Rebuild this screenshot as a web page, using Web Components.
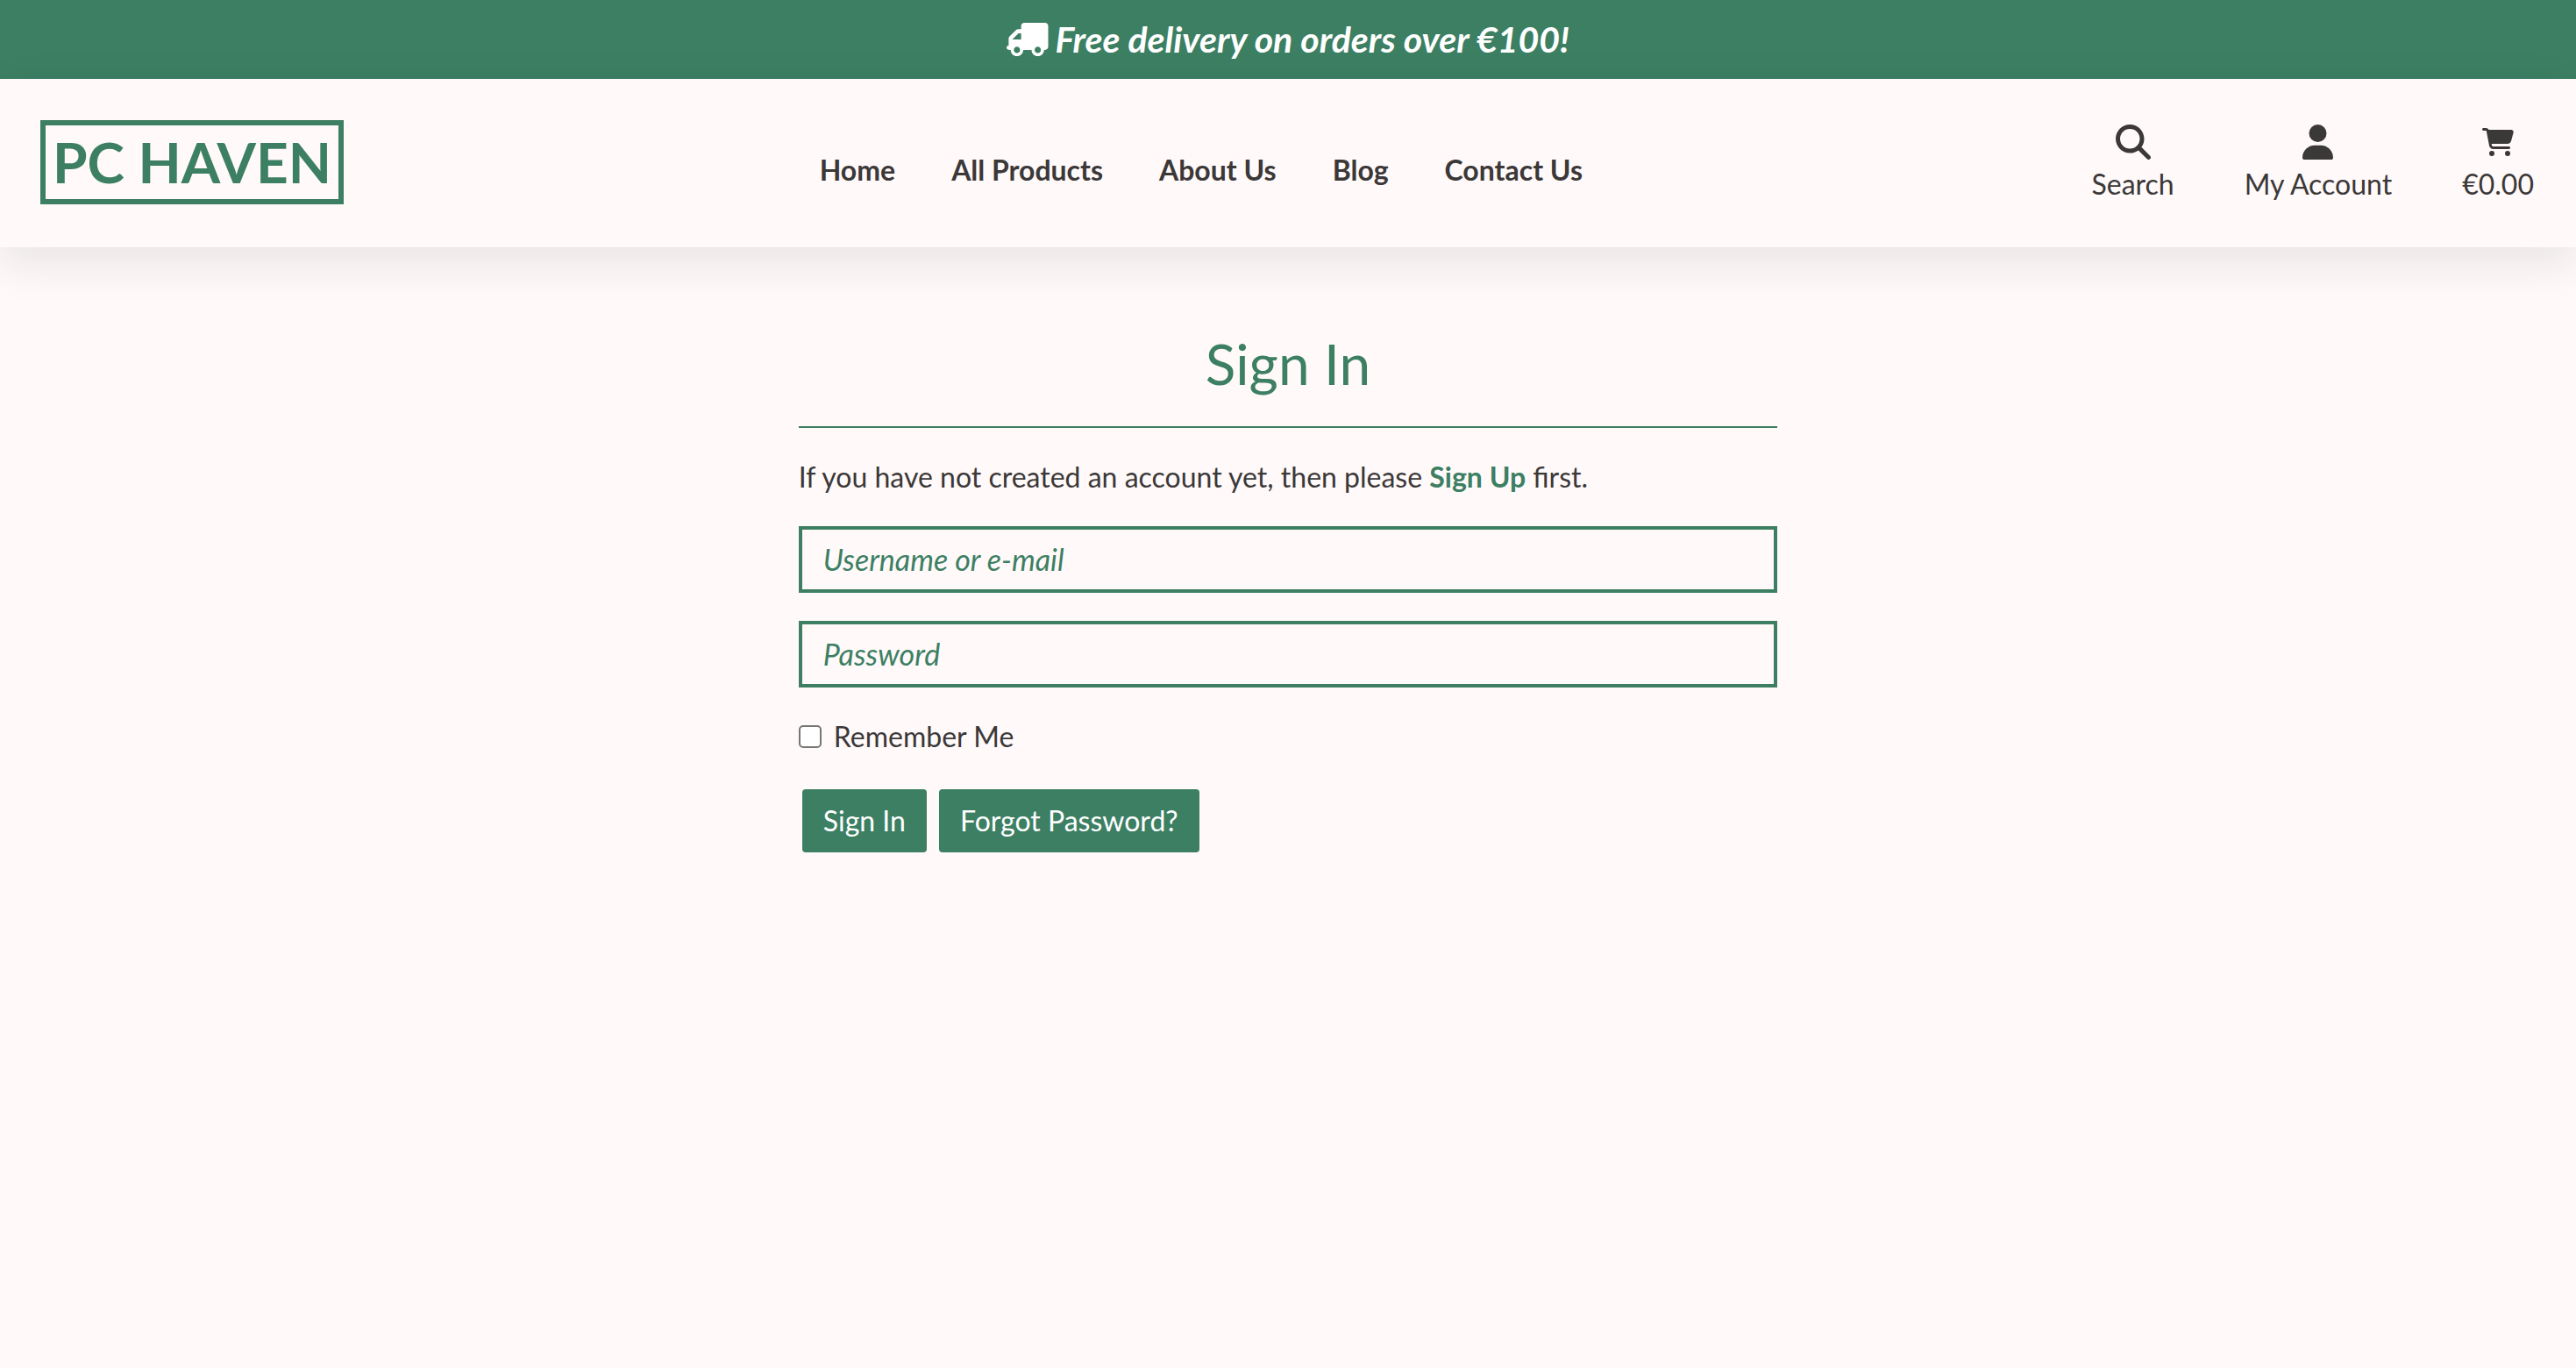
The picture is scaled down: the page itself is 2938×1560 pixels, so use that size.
<!DOCTYPE html>
<html lang="en">
<head>
<meta charset="utf-8">
<title>PC Haven - Sign In</title>
<style>
:root { --green: #3c7f63; --ink: #3b3838; --paper: #fff9f9; }
body { margin: 0; background: var(--paper); color: var(--ink); font: 32px/48px Lato, sans-serif; }
</style>
</head>
<body>
<promo-banner>Free delivery on orders over €100!</promo-banner>
<site-header>
  <nav-link href="#home">Home</nav-link>
  <nav-link href="#products">All Products</nav-link>
  <nav-link href="#about">About Us</nav-link>
  <nav-link href="#blog">Blog</nav-link>
  <nav-link href="#contact">Contact Us</nav-link>
  <header-action slot="actions" icon="search" href="#search">Search</header-action>
  <header-action slot="actions" icon="user" href="#account">My Account</header-action>
  <header-action slot="actions" icon="cart" href="#bag">€0.00</header-action>
</site-header>
<sign-in-form></sign-in-form>
<script>
const ICONS = {
  truck: ['0 0 640 512', 'M16 352h16V243.9c0-12.7 5.1-24.9 14.1-33.9L146 110.1c9-9 21.2-14.1 33.9-14.1H224V48c0-26.5 21.5-48 48-48h320c26.5 0 48 21.5 48 48v320c0 26.5-21.5 48-48 48h-16c0 53-43 96-96 96s-96-43-96-96H256c0 53-43 96-96 96s-96-43-96-96H48c-26.500 0-48-14-48-32s7-32 16-32zM480 464c26.500 0 48-21.500 48-48s-21.500-48-48-48-48 21.500-48 48 21.500 48 48 48zM160 464c26.500 0 48-21.500 48-48s-21.500-48-48-48-48 21.500-48 48 21.500 48 48 48zM88 256H224V160h-40L88 256z'],
  search: ['0 0 512 512', 'M416 208c0 45.9-14.9 88.3-40 122.7L502.6 457.4c12.5 12.5 12.5 32.8 0 45.3s-32.8 12.5-45.3 0L330.7 376c-34.4 25.2-76.8 40-122.7 40C93.1 416 0 322.9 0 208S93.1 0 208 0S416 93.1 416 208zM208 352a144 144 0 1 0 0-288 144 144 0 1 0 0 288z'],
  user: ['0 0 448 512', 'M224 256A128 128 0 1 0 224 0a128 128 0 1 0 0 256zm-45.7 48C79.8 304 0 383.8 0 482.3C0 498.7 13.3 512 29.7 512H418.3c16.4 0 29.7-13.3 29.7-29.7C448 383.8 368.2 304 269.7 304H178.3z'],
  cart: ['0 0 576 512', 'M0 24C0 10.7 10.7 0 24 0H69.5c22 0 41.5 12.8 50.6 32h411c26.3 0 45.5 25 38.6 50.4l-41 152.3c-8.5 31.4-37 53.3-69.5 53.3H170.7l5.4 28.5c2.2 11.3 12.1 19.5 23.6 19.500H488c13.3 0 24 10.7 24 24s-10.700 24-24 24H199.700c-34.600 0-64.300-24.600-70.700-58.500L77.400 54.500c-.7-3.800-4-6.500-7.900-6.500H24C10.700 48 0 37.300 0 24zM128 464a48 48 0 1 1 96 0 48 48 0 1 1-96 0zm336-48a48 48 0 1 1 0 96 48 48 0 1 1 0-96z']
};
const icon = name => `<svg class="${name}" viewBox="${ICONS[name][0]}" fill="currentColor" fill-rule="evenodd" aria-hidden="true"><path d="${ICONS[name][1]}"/></svg>`;

function define(tag, render) {
  customElements.define(tag, class extends HTMLElement {
    constructor() {
      super();
      this.attachShadow({ mode: 'open' });
    }
    connectedCallback() {
      this.shadowRoot.innerHTML = render(this);
    }
  });
}

define('promo-banner', () => `
<style>
  :host { display: flex; justify-content: center; align-items: center; gap: 8px; height: 90px;
    background: var(--green); color: #fff; font-size: 41px; font-weight: 700; font-style: italic; }
  svg { height: 38px; }
</style>
${icon('truck')}<span><slot></slot></span>`);

define('site-header', () => `
<style>
  :host { display: block; box-shadow: 0 16px 48px rgba(30, 40, 50, .1); }
  header { display: flex; justify-content: space-between; align-items: center; min-height: 192px; padding: 0 48px 2px 46px; box-sizing: border-box; }
  .logo { border: 6px solid var(--green); padding: 0 8px; color: var(--green); text-decoration: none;
    font-size: 64px; line-height: 84px; font-weight: 700; }
  nav { display: flex; gap: 64px; padding-top: 18px; }
  .actions { display: flex; gap: 80px; padding: 6px 0 0 38px; }
</style>
<header>
  <a class="logo" href="#home">PC HAVEN</a>
  <nav><slot></slot></nav>
  <div class="actions"><slot name="actions"></slot></div>
</header>`);

define('nav-link', el => `
<style>
  :host { display: block; }
  a { color: inherit; text-decoration: none; font-weight: 700; }
</style>
<a href="${el.getAttribute('href')}"><slot></slot></a>`);

define('header-action', el => `
<style>
  :host { display: block; }
  a { display: flex; flex-direction: column; align-items: center; color: inherit; text-decoration: none; }
  .icon { display: flex; align-items: center; height: 40px; margin-bottom: 4px; }
  svg { height: 40px; }
  svg.cart { height: 32px; }
</style>
<a href="${el.getAttribute('href')}"><span class="icon">${icon(el.getAttribute('icon'))}</span><span><slot></slot></span></a>`);

define('text-field', el => `
<style>
  :host { display: block; }
  input { display: block; width: 100%; box-sizing: border-box; height: 76px; padding: 0 24px; margin: 0;
    border: 4px solid var(--green); border-radius: 0; background: transparent; color: var(--ink); font: inherit; outline: 0; }
  input::placeholder { color: var(--green); font-size: 34px; font-style: italic; opacity: 1; }
</style>
<input type="${el.getAttribute('type')}" placeholder="${el.getAttribute('label')}" aria-label="${el.getAttribute('label')}">`);

define('sign-in-form', () => `
<style>
  :host { display: block; width: 38%; margin: 0 auto; padding-top: 94px; }
  h1 { margin: 0; padding-bottom: 32px; border-bottom: 2px solid var(--green); color: var(--green);
    font-size: 64px; line-height: 78px; font-weight: 400; text-align: center; }
  p { margin: 32px 0; }
  p a { color: var(--green); font-weight: 700; text-decoration: none; }
  form { display: flex; flex-direction: column; gap: 32px; }
  .remember { display: flex; align-items: center; gap: 14px; }
  .remember input { appearance: none; width: 26px; height: 26px; margin: 0; border: 2px solid #767676; border-radius: 5px; background: #fff; box-sizing: border-box; }
  .remember input:checked { background: var(--green); }
  .buttons { display: flex; gap: 14px; padding: 4px; }
  button { height: 72px; padding: 0 24px; border: 0; border-radius: 4px; background: var(--green); color: #fff; font: inherit; }
</style>
<main>
  <h1>Sign In</h1>
  <p>If you have not created an account yet, then please <a href="#signup">Sign Up</a> first.</p>
  <form>
    <text-field type="text" label="Username or e-mail"></text-field>
    <text-field type="password" label="Password"></text-field>
    <div class="remember"><input type="checkbox" id="remember"><label for="remember">Remember Me</label></div>
    <div class="buttons"><button type="submit">Sign In</button><button type="button">Forgot Password?</button></div>
  </form>
</main>`);
</script>
</body>
</html>
